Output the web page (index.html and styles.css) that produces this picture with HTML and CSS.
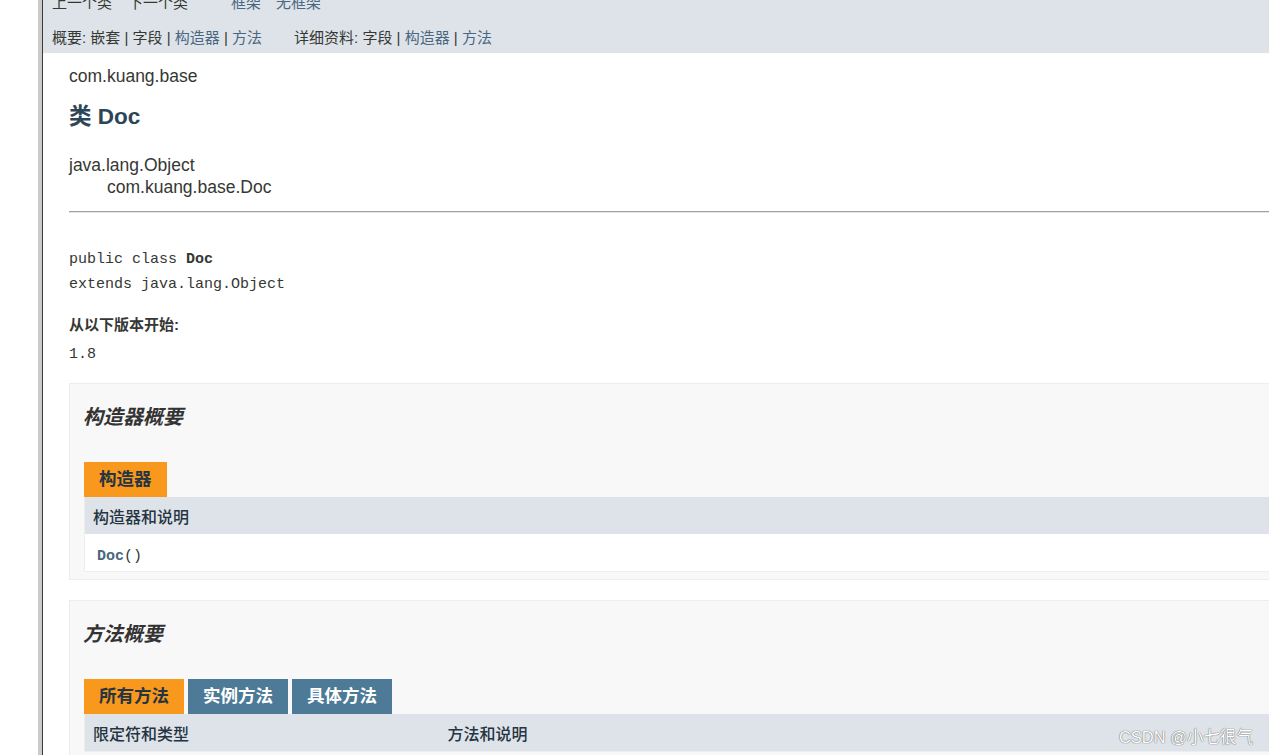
FILE: index.html
```html
<!DOCTYPE html>
<html lang="zh-CN">
<head>
<meta charset="utf-8">
<title>Doc</title>
<link rel="stylesheet" href="styles.css">
</head>
<body>
<div class="page">
  <div class="gutter"></div>
  <div class="rail"></div>
  <div class="rail-edge"></div>
  <div class="frame">
    <div class="nav">
      <div class="topnav">
        <span>上一个类</span>
        <span class="next">下一个类</span>
        <a class="frames" href="#">框架</a>
        <a class="noframes" href="#">无框架</a>
      </div>
      <div class="subnav">
        <div>概要:&nbsp;嵌套&nbsp;|&nbsp;字段&nbsp;|&nbsp;<a href="#">构造器</a>&nbsp;|&nbsp;<a href="#">方法</a></div>
        <div class="detail">详细资料:&nbsp;字段&nbsp;|&nbsp;<a href="#">构造器</a>&nbsp;|&nbsp;<a href="#">方法</a></div>
      </div>
    </div>
    <div class="content">
      <div class="pkg">com.kuang.base</div>
      <h2 class="title">类 Doc</h2>
      <div class="inherit">
        <div>java.lang.Object</div>
        <div class="sub">com.kuang.base.Doc</div>
      </div>
      <hr class="rule">
      <pre class="sig">public class <b>Doc</b>
extends java.lang.Object</pre>
      <div class="since-label">从以下版本开始:</div>
      <div class="since">1.8</div>

      <div class="block">
        <h3>构造器概要</h3>
        <div class="tabs"><span class="tab active">构造器</span></div>
        <table>
          <tr><th>构造器和说明</th></tr>
          <tr><td><a class="member" href="#">Doc</a>()</td></tr>
        </table>
      </div>

      <div class="block block-methods">
        <h3>方法概要</h3>
        <div class="tabs">
          <span class="tab active">所有方法</span>
          <span class="tab">实例方法</span>
          <span class="tab">具体方法</span>
        </div>
        <table class="methods">
          <tr><th class="first">限定符和类型</th><th>方法和说明</th></tr>
        </table>
      </div>
    </div>
  </div>
</div>
<div class="watermark">CSDN @小七很气</div>
</body>
</html>
```

FILE: styles.css
```css
body {
  margin: 0;
  overflow: hidden;
  background: #fff;
  color: #353833;
  font-family: "Liberation Sans", "Noto Sans CJK SC", sans-serif;
}

.page {
  display: flex;
  height: 755px;
}

.gutter { flex: 0 0 38px; }
.rail { flex: 0 0 4px; background: #cbcbcb; }
.rail-edge { flex: 0 0 1px; background: #3a3a3a; }

.frame {
  flex: 1;
  min-width: 0;
  overflow: hidden;
}

a {
  color: #4a6782;
  text-decoration: none;
}

.nav {
  background: #dee3e9;
  padding: 0 0 5px 9px;
  font-size: 15px;
  line-height: 20px;
}

.topnav {
  display: flex;
  height: 20px;
  margin-top: -7px;
}
.topnav .next { margin-left: 16px; }
.topnav .frames { margin-left: 43px; }
.topnav .noframes { margin-left: 15px; }

.subnav {
  display: flex;
  margin-top: 15px;
  white-space: nowrap;
}
.subnav .detail { margin-left: 32px; }

.content {
  width: calc(100% + 40px);
  box-sizing: border-box;
  padding: 13px 0 0 26px;
}

.pkg {
  font-size: 17.5px;
  line-height: 21px;
}

.title {
  margin: 16px 0 0;
  font-size: 22.5px;
  line-height: 27px;
  font-weight: bold;
  color: #2c4557;
}

.inherit {
  margin-top: 24px;
  font-size: 17.5px;
  line-height: 22px;
}
.inherit .sub { padding-left: 38px; }

.rule {
  margin: 12.5px 0 0;
  height: 0;
  border: 0;
  border-top: 1px solid #a0a0a0;
  border-bottom: 1px solid #e6e6e6;
}

.sig {
  margin: 34px 0 0;
  font-family: "Liberation Mono", monospace;
  font-size: 15px;
  line-height: 25px;
}

.since-label {
  margin-top: 18px;
  font-size: 15px;
  line-height: 20px;
  font-weight: bold;
}

.since {
  margin-top: 10px;
  font-family: "Liberation Mono", monospace;
  font-size: 15px;
  line-height: 20px;
}

.block {
  margin-top: 18px;
  background: #f8f8f8;
  border: 1px solid #ededed;
  padding: 20px 14px 7px 14px;
}
.block-methods { margin-top: 20px; }

.block h3 {
  margin: 0 0 0 -1px;
  font-size: 20px;
  line-height: 26px;
  font-style: italic;
  font-weight: bold;
  color: #333;
}

.tabs {
  display: flex;
  gap: 4px;
  margin-top: 32px;
}

.tab {
  height: 35px;
  line-height: 35px;
  padding: 0 15px;
  font-size: 17.5px;
  font-weight: bold;
  background: #4d7a97;
  color: #fff;
}
.tab.active {
  background: #f8981d;
  color: #253441;
}

table {
  width: 100%;
  border-collapse: collapse;
  table-layout: fixed;
  border: 1px solid #eee;
  border-top: 0;
}

th {
  background: #dee3e9;
  text-align: left;
  font-size: 16px;
  font-weight: 500;
  line-height: 24px;
  padding: 9px 3px 4px 8px;
  color: #253441;
}
th.first {
  width: 355px;
  box-sizing: border-box;
}

td {
  background: #fff;
  padding: 11px 3px 2px 12px;
  line-height: 24px;
  font-family: "Liberation Mono", monospace;
  font-size: 15px;
}
td .member { font-weight: bold; }

.watermark {
  position: absolute;
  right: 16px;
  top: 727px;
  font-size: 16.5px;
  line-height: 20px;
  color: #fff;
  text-shadow: 0 0 1px #666, 0 0 1px #666;
}
```
